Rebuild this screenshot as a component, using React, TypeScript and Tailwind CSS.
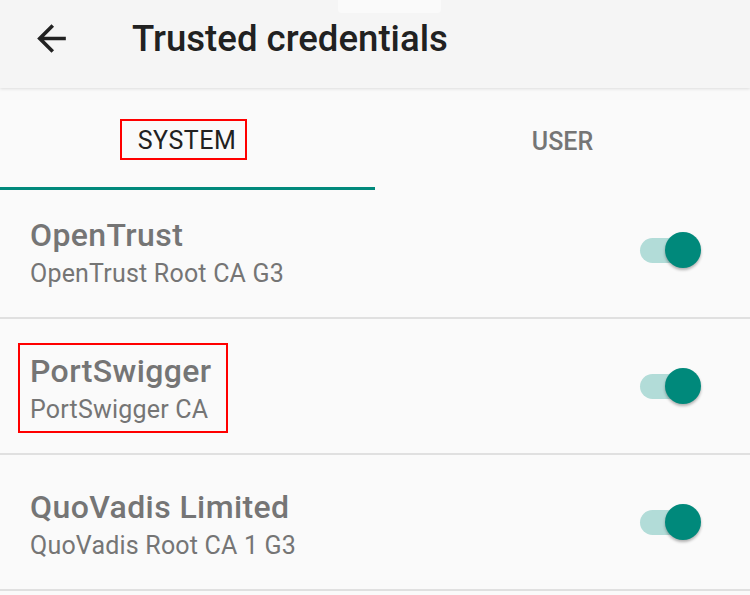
import React from 'react';

const certs = [
  { name: 'OpenTrust', detail: 'OpenTrust Root CA G3', first: true, marked: false },
  { name: 'PortSwigger', detail: 'PortSwigger CA', first: false, marked: true },
  { name: 'QuoVadis Limited', detail: 'QuoVadis Root CA 1 G3', first: false, marked: false },
];

function Toggle({ lift }: { lift: boolean }) {
  return (
    <div className={`relative w-[61px] h-[36px] flex items-center ${lift ? 'mb-[7px]' : ''}`}>
      <div className="w-[52px] h-[25px] rounded-full bg-[#b2dcd8]" />
      <div className="absolute right-0 top-0 w-[36px] h-[36px] rounded-full bg-[#00897b] shadow-[0_2px_3px_rgba(0,0,0,0.3)]" />
    </div>
  );
}

export default function App() {
  return (
    <div className="w-[750px] h-[595px] overflow-hidden bg-[#fafafa] font-['Roboto',sans-serif]">
      {/* toolbar */}
      <div className="relative z-10 h-[88px] bg-[#f5f5f5] shadow-[0_1px_3px_rgba(0,0,0,0.12)] flex items-center pb-[12px]">
        <div className="absolute top-0 left-[338px] w-[103px] h-[13px] rounded-b-[4px] bg-[#fafafa]" />
        <svg viewBox="0 0 24 24" className="ml-[30px] w-[43px] h-[43px]" fill="#222">
          <path d="M20 11H7.83l5.59-5.59L12 4l-8 8 8 8 1.41-1.41L7.83 13H20v-2z" />
        </svg>
        <h1 className="ml-[59px] mt-[2px] text-[36.6px] font-medium text-[#212121]">Trusted credentials</h1>
      </div>

      {/* tabs */}
      <div className="flex h-[102px]">
        <div className="flex-1 flex items-center justify-center border-b-[3px] border-[#00897b] pt-[4px]">
          <span className="mr-[8px] border-2 border-[#ff0000] pl-[16px] pr-[9px] pt-[7px] pb-[5px] text-[25px] tracking-[0.5px] text-[#212121] leading-[25px]">
            SYSTEM
          </span>
        </div>
        <div className="flex-1 flex items-center justify-center pt-[4px]">
          <span className="text-[25px] font-medium text-[#757575] leading-[25px]">USER</span>
        </div>
      </div>

      {/* list */}
      {certs.map((c) => (
        <div
          key={c.name}
          className={`${c.first ? 'h-[129px]' : 'h-[136px]'} flex items-center justify-between pl-[30px] pr-[49px] border-b-2 border-[#e0e0e0]`}
        >
          <div
            className={
              c.marked
                ? '-ml-[12px] mt-[4px] border-2 border-[#ff0000] pl-[10px] pr-[14px] pt-[8px] pb-[4px]'
                : c.first
                  ? ''
                  : 'mt-[8px]'
            }
          >
            <div className="text-[32px] font-medium tracking-[0.4px] text-[#757575] leading-[36px]">{c.name}</div>
            <div className="mt-[4px] text-[25px] tracking-[0.2px] text-[#757575] leading-[34px]">{c.detail}</div>
          </div>
          <Toggle lift={c.first} />
        </div>
      ))}
    </div>
  );
}
